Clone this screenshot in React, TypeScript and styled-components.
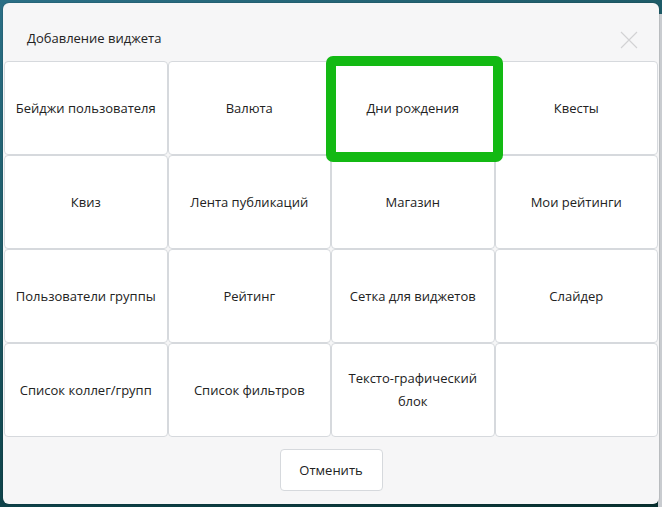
import React from "react";
import styled, { createGlobalStyle } from "styled-components";

const Global = createGlobalStyle`
  html, body { margin: 0; padding: 0; }
  body {
    width: 662px;
    height: 507px;
    overflow: hidden;
    font-family: "Open Sans", "Noto Sans", sans-serif;
    background: linear-gradient(160deg, #2b6f86 0%, #1d5a66 35%, #0e4148 70%, #08302f 100%);
  }
`;

const Page = styled.div`
  position: relative;
  width: 662px;
  height: 507px;
`;

const SideStrip = styled.div`
  position: absolute;
  right: 0;
  top: 14px;
  width: 4px;
  height: 493px;
  background: #c9ccd0;
`;

const Modal = styled.div`
  position: absolute;
  left: 3px;
  top: 3px;
  width: 656px;
  height: 501px;
  background: #f6f6f7;
  border-radius: 6px;
  display: flex;
  flex-direction: column;
  overflow: hidden;
  box-shadow: 0 0 0 1px rgba(0, 0, 0, 0.08);
`;

const Header = styled.div`
  height: 58px;
  box-sizing: border-box;
  padding: 27px 21px 0 24px;
  display: flex;
  justify-content: space-between;
  align-items: flex-start;
`;

const Title = styled.div`
  font-size: 13px;
  line-height: 16px;
  color: #222;
`;

const Close = styled.button`
  border: none;
  background: none;
  padding: 0;
  margin: 1px 0 0 0;
  width: 18px;
  height: 18px;
  cursor: pointer;
  svg { display: block; }
`;

const Grid = styled.div`
  display: grid;
  grid-template-columns: repeat(4, 1fr);
  grid-auto-rows: 94px;
  padding: 0 1px;
  background: #f6f6f7;
`;

const Cell = styled.button<{ $empty?: boolean }>`
  position: relative;
  box-sizing: border-box;
  border: 1px solid #d6d9dd;
  border-radius: 4px;
  background: #fff;
  font-family: inherit;
  font-size: 13px;
  line-height: 23px;
  color: #222;
  display: flex;
  align-items: center;
  justify-content: center;
  text-align: center;
  padding: 0 10px;
  cursor: ${(p) => (p.$empty ? "default" : "pointer")};
`;

const Highlight = styled.div`
  position: absolute;
  z-index: 5;
  left: -6px;
  top: -6px;
  right: -9px;
  bottom: -8px;
  border: 10px solid #13b913;
  border-radius: 7px;
  pointer-events: none;
`;

const Footer = styled.div`
  flex: 1;
  display: flex;
  justify-content: center;
  align-items: flex-start;
  padding-top: 12px;
`;

const CancelButton = styled.button`
  width: 103px;
  height: 42px;
  background: #fff;
  border: 1px solid #d6d9dd;
  border-radius: 4px;
  font-family: inherit;
  font-size: 13px;
  color: #222;
  cursor: pointer;
`;

const items: { label: React.ReactNode; highlight?: boolean; empty?: boolean }[] = [
  { label: "Бейджи пользователя" },
  { label: "Валюта" },
  { label: "Дни рождения", highlight: true },
  { label: "Квесты" },
  { label: "Квиз" },
  { label: "Лента публикаций" },
  { label: "Магазин" },
  { label: "Мои рейтинги" },
  { label: "Пользователи группы" },
  { label: "Рейтинг" },
  { label: "Сетка для виджетов" },
  { label: "Слайдер" },
  { label: "Список коллег/групп" },
  { label: "Список фильтров" },
  { label: <>Тексто-графический<br />блок</> },
  { label: "", empty: true },
];

export default function App() {
  return (
    <Page>
      <Global />
      <SideStrip />
      <Modal>
        <Header>
          <Title>Добавление виджета</Title>
          <Close aria-label="Закрыть">
            <svg width="18" height="18" viewBox="0 0 18 18">
              <path d="M1 1 L17 17 M17 1 L1 17" stroke="#d2d2d4" strokeWidth="1.1" />
            </svg>
          </Close>
        </Header>
        <Grid>
          {items.map((it, i) => (
            <Cell key={i} $empty={it.empty}>
              {it.label}
              {it.highlight && <Highlight />}
            </Cell>
          ))}
        </Grid>
        <Footer>
          <CancelButton>Отменить</CancelButton>
        </Footer>
      </Modal>
    </Page>
  );
}
